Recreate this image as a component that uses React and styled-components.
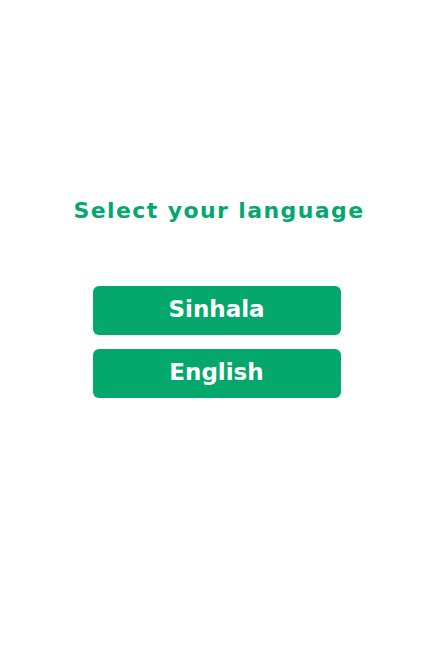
import React from "react";
import styled, { createGlobalStyle } from "styled-components";

const Global = createGlobalStyle`
  html, body { margin: 0; padding: 0; background: #ffffff; }
  body { font-family: "DejaVu Sans", "Liberation Sans", sans-serif; }
`;

const Page = styled.div`
  width: 433px;
  height: 659px;
  display: flex;
  flex-direction: column;
  align-items: center;
  padding-top: 197px;
  box-sizing: border-box;
`;

const Title = styled.h1`
  margin: 0 0 61px 5px;
  font-size: 22px;
  line-height: 28px;
  font-weight: 700;
  letter-spacing: 1.4px;
  color: #05a86c;
`;

const Options = styled.div`
  display: flex;
  flex-direction: column;
  gap: 14px;
`;

const LangButton = styled.button`
  width: 248px;
  height: 49px;
  border: none;
  border-radius: 6px;
  background: #05a86c;
  color: #ffffff;
  font-family: inherit;
  font-size: 23px;
  font-weight: 700;
  cursor: pointer;
  padding: 0 0 4px;
`;

export default function App() {
  return (
    <>
      <Global />
      <Page>
        <Title>Select your language</Title>
        <Options>
          <LangButton>Sinhala</LangButton>
          <LangButton>English</LangButton>
        </Options>
      </Page>
    </>
  );
}
